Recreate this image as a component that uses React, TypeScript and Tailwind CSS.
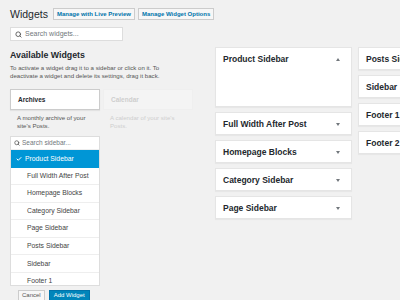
import { Search, Check } from 'lucide-react';

const sidebarsMain = ['Full Width After Post', 'Homepage Blocks', 'Category Sidebar', 'Page Sidebar'];
const sidebarsSide = ['Posts Sidebar', 'Sidebar', 'Footer 1', 'Footer 2'];
const chooser = [
  'Full Width After Post',
  'Homepage Blocks',
  'Category Sidebar',
  'Page Sidebar',
  'Posts Sidebar',
  'Sidebar',
  'Footer 1',
];

function Arrow({ up }: { up?: boolean }) {
  return (
    <svg width="4" height="3" viewBox="0 0 4 3" className="shrink-0">
      <polygon points={up ? '0,3 4,3 2,0' : '0,0 4,0 2,3'} fill="#72777c" />
    </svg>
  );
}

function SidebarPanel({ title, open }: { title: string; open?: boolean }) {
  return (
    <div className={`bg-white border border-[#e5e5e5] shadow-[0_1px_1px_rgba(0,0,0,0.04)] ${open ? 'h-[60px]' : 'h-[23px]'}`}>
      <div className="h-[22px] flex items-center justify-between pl-[7px] pr-[11px]">
        <span className="text-[8.5px] font-bold text-[#23282d] whitespace-nowrap">{title}</span>
        <Arrow up={open} />
      </div>
    </div>
  );
}

export default function App() {
  return (
    <div className="w-[400px] h-[300px] overflow-hidden bg-[#f1f1f1] px-[10px] pt-[8px] font-['Liberation_Sans',Arial,sans-serif] text-[#444]">
      <div className="flex items-center h-[12px]">
        <h1 className="text-[10.5px] leading-[12px] text-[#23282d] mr-[5px]">Widgets</h1>
        <button className="h-[12px] px-[3px] border border-[#ccc] bg-[#f7f7f7] text-[6px] font-bold text-[#0073aa] mr-[3px] whitespace-nowrap">
          Manage with Live Preview
        </button>
        <button className="h-[12px] px-[3px] border border-[#ccc] bg-[#f7f7f7] text-[6px] font-bold text-[#0073aa] whitespace-nowrap">
          Manage Widget Options
        </button>
      </div>

      <div className="flex mt-[7px]">
        <div className="w-[183px] shrink-0">
          <div className="w-[113px] h-[14px] bg-white border border-[#ddd] flex items-center pl-[4px] gap-[3px]">
            <Search size={7} strokeWidth={3} color="#555" />
            <span className="text-[7px] text-[#72777c]">Search widgets...</span>
          </div>

          <h2 className="mt-[9px] text-[8.8px] leading-[11px] font-bold text-[#23282d]">Available Widgets</h2>
          <p className="mt-[3px] w-[170px] text-[6.1px] leading-[8px] text-[#555]">
            To activate a widget drag it to a sidebar or click on it. To deactivate a widget and delete its settings, drag it back.
          </p>

          <div className="flex gap-[3px] mt-[9px]">
            <div className="w-[90px]">
              <div className="h-[21px] bg-white border border-[#ccc] shadow-[0_1px_1px_rgba(0,0,0,0.06)] flex items-center pl-[7px]">
                <span className="text-[6.5px] font-bold text-[#23282d]">Archives</span>
              </div>
              <p className="mt-[4px] px-[7px] text-[6.1px] leading-[8px] text-[#555]">A monthly archive of your site's Posts.</p>
            </div>
            <div className="w-[90px] opacity-40">
              <div className="h-[21px] bg-[#f9f9f9] border border-[#eee] flex items-center pl-[7px]">
                <span className="text-[6.5px] font-bold text-[#999]">Calendar</span>
              </div>
              <p className="mt-[4px] px-[7px] text-[6.1px] leading-[8px] text-[#999]">A calendar of your site's Posts.</p>
            </div>
          </div>

          <div className="mt-[6px] w-[90px] border border-[#ddd] bg-white">
            <div className="h-[13px] flex items-center pl-[3px] gap-[2px] border-b border-[#eee]">
              <Search size={6} strokeWidth={3} color="#555" />
              <span className="text-[6.5px] text-[#72777c]">Search sidebar...</span>
            </div>
            <div className="h-[135px] overflow-hidden">
              <div className="h-[17.5px] bg-[#0096d6] flex items-center pl-[5px] gap-[3px]">
                <Check size={6} strokeWidth={4} color="#fff" />
                <span className="text-[6.8px] text-white">Product Sidebar</span>
              </div>
              {chooser.map((name) => (
                <div key={name} className="h-[17.6px] flex items-center pl-[16px] border-b border-[#eee]">
                  <span className="text-[6.8px] text-[#444]">{name}</span>
                </div>
              ))}
            </div>
          </div>

          <div className="mt-[4px] flex gap-[4px] pl-[8px]">
            <button className="h-[11px] px-[3px] border border-[#ccc] bg-[#f7f7f7] text-[6px] text-[#555]">Cancel</button>
            <button className="h-[11px] px-[4px] border border-[#0073aa] bg-[#0085ba] text-[6px] text-white">Add Widget</button>
          </div>
        </div>

        <div className="ml-[22px] mt-[20px] flex gap-[6px] items-start">
          <div className="w-[137px] shrink-0 flex flex-col gap-[5px]">
            <SidebarPanel title="Product Sidebar" open />
            {sidebarsMain.map((s) => (
              <SidebarPanel key={s} title={s} />
            ))}
          </div>
          <div className="w-[137px] shrink-0 flex flex-col gap-[5px]">
            {sidebarsSide.map((s) => (
              <SidebarPanel key={s} title={s} />
            ))}
          </div>
        </div>
      </div>
    </div>
  );
}
